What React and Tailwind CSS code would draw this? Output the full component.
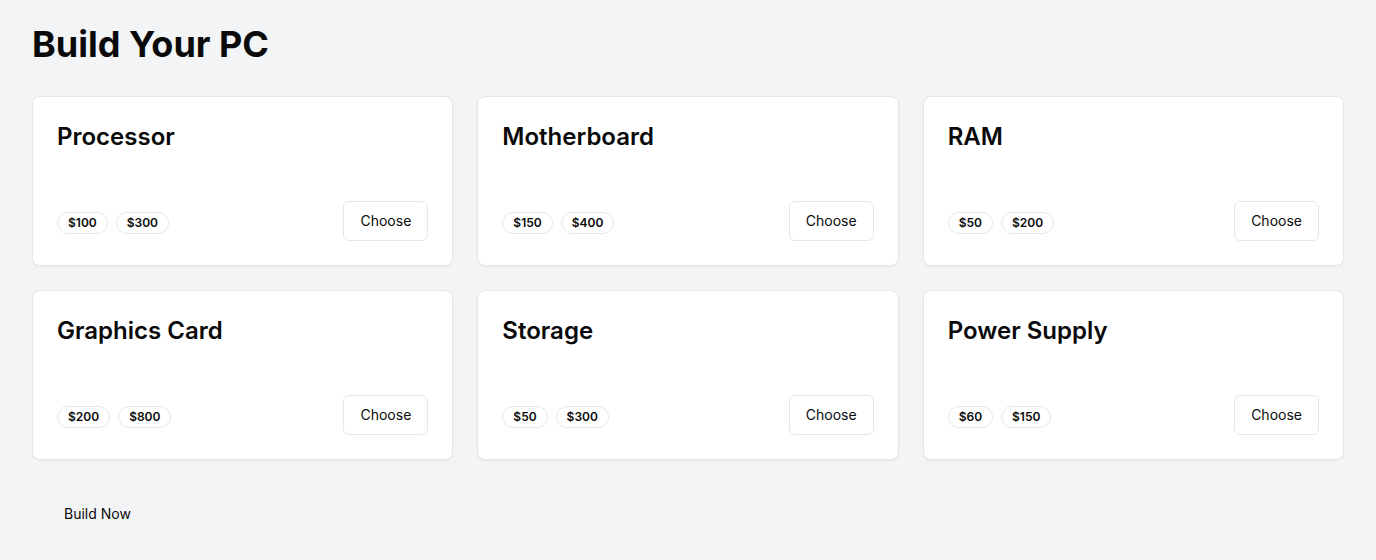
const parts = [
  { name: "Processor", prices: ["$100", "$300"] },
  { name: "Motherboard", prices: ["$150", "$400"] },
  { name: "RAM", prices: ["$50", "$200"] },
  { name: "Graphics Card", prices: ["$200", "$800"] },
  { name: "Storage", prices: ["$50", "$300"] },
  { name: "Power Supply", prices: ["$60", "$150"] },
];

export default function App() {
  return (
    <div
      className="min-h-[560px] bg-[#f3f4f6] px-8 pt-6 pb-8 text-[#0a0a0a]"
      style={{ fontFamily: "Inter, 'Noto Sans', sans-serif" }}
    >
      <h1 className="text-4xl font-bold mb-8">Build Your PC</h1>
      <div className="grid grid-cols-3 gap-6">
        {parts.map((p) => (
          <div
            key={p.name}
            className="bg-white border border-[#e5e7eb] rounded-lg shadow-xs p-6 flex flex-col"
          >
            <h2 className="text-2xl font-semibold leading-8">{p.name}</h2>
            <div className="mt-12 flex items-center justify-between">
              <div className="flex gap-2 mt-1">
                {p.prices.map((pr) => (
                  <span
                    key={pr}
                    className="rounded-full border border-[#e5e7eb] px-2.5 py-0.5 text-xs font-semibold leading-4"
                  >
                    {pr}
                  </span>
                ))}
              </div>
              <button className="h-10 px-4 rounded-md border border-[#e5e7eb] bg-white text-sm font-normal">
                Choose
              </button>
            </div>
          </div>
        ))}
      </div>
      <button className="mt-[34px] h-10 px-8 text-sm font-normal">Build Now</button>
    </div>
  );
}
